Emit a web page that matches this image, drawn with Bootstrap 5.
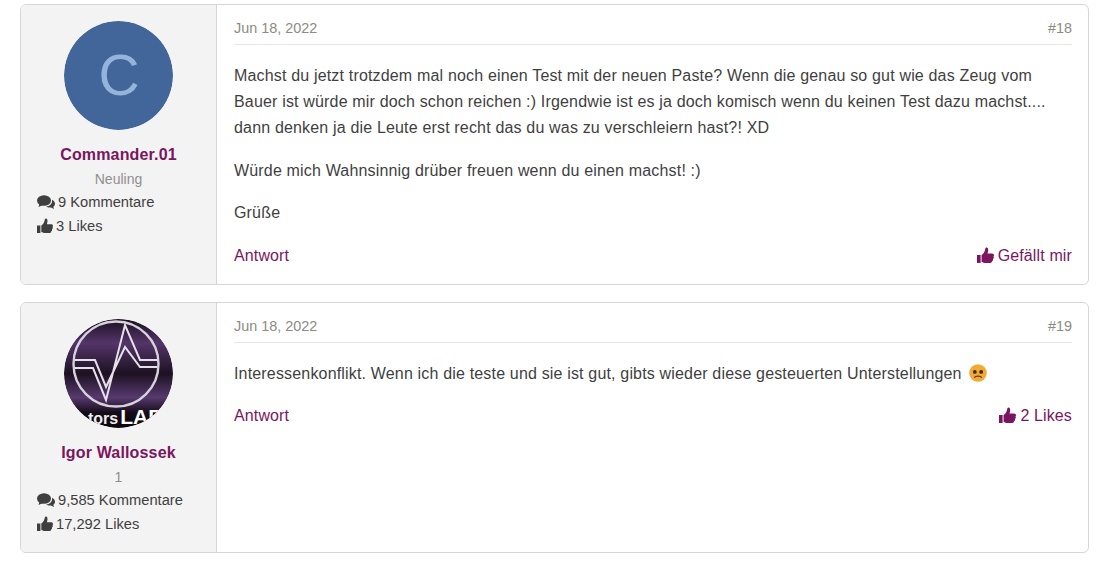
<!DOCTYPE html>
<html lang="de">
<head>
<meta charset="utf-8">
<title>Kommentare</title>
<link href="https://cdn.jsdelivr.net/npm/bootstrap@5.3.0/dist/css/bootstrap.min.css" rel="stylesheet">
<style>
body{font-family:"Liberation Sans",Arial,sans-serif;font-size:16px;color:#3f3f3f;background:#fff;}
.thread-wrap{padding:4px 12px 0 20px;}
.post-box{border:1px solid #d6d6d6;border-radius:6px;margin-bottom:17px;overflow:hidden;}
.post-box-a{height:281px;}
.post-box-b{height:251px;}
.post-side{flex:none;background:#f3f3f3;border-right:1px solid #d6d6d6;padding:16px 16px 0;box-sizing:content-box;width:163px;}
.post-avatar{width:109px;height:109px;border-radius:50%;display:block;margin:0 auto;}
.post-name{font-weight:700;color:#7b1560;text-align:center;margin-top:13px;line-height:24px;letter-spacing:.16px;}
.post-rank{font-size:14px;color:#8f8f8f;text-align:center;line-height:20px;margin-top:2px;margin-bottom:1px;}
.post-stat{font-size:14.7px;line-height:24px;color:#3f3f3f;display:flex;align-items:center;gap:3px;white-space:nowrap;}
.post-stat svg{flex:none;fill:#3f3f3f;}
.post-body{padding:11px 16px 0 17px;min-width:0;}
.post-meta{font-size:14.4px;color:#8c8c80;border-bottom:1px solid #e6e6e6;height:29px;line-height:24px;}
.post-text{line-height:26px;margin-top:18px;letter-spacing:.17px;}
.post-text p{margin:0 0 16.5px;}
.post-text.short-text p{margin-bottom:15.5px;}
.post-foot{color:#7b1560;line-height:24px;margin-top:1px;letter-spacing:.13px;}
.post-foot svg{fill:#7b1560;}
.like-link{display:flex;align-items:center;gap:4px;}
.emo{vertical-align:-3px;margin-left:3px;}
</style>
</head>
<body>
<div class="thread-wrap">

<div class="post-box post-box-a d-flex">
  <div class="post-side">
    <svg class="post-avatar" viewBox="0 0 109 109"><circle cx="54.5" cy="54.5" r="54.5" fill="#42659a"/><text x="55" y="74" font-family="Liberation Sans, sans-serif" font-size="57" fill="#94b4dc" text-anchor="middle">C</text></svg>
    <div class="post-name">Commander.01</div>
    <div class="post-rank">Neuling</div>
    <div class="post-stat"><svg width="18" height="14" viewBox="0 0 18 14"><ellipse cx="7" cy="5.500" rx="7" ry="5.300"/><path d="M2.500 8.500 1.500 12 6 10z"/><path d="M15 4.800c1.900.9 3 2.300 3 3.900 0 1.200-.7 2.300-1.700 3.100l.7 2.200-3-1.500c-1.500.3-3.700 0-4.800-1 3.500-.1 6.500-2.800 5.800-6.700z"/></svg>9 Kommentare</div>
    <div class="post-stat"><svg width="16" height="16" viewBox="0 0 16 16"><path d="M0 7.500h3.400V15H0z"/><path d="M4.300 7.500c1.800-1 3-3.200 3.400-5.500.1-1 .7-1.600 1.500-1.500 1.300.2 1.700 2 1 4.500-.1.400-.2.700-.3 1.200h4.300c1 0 1.800.7 1.800 1.600 0 .5-.2.900-.5 1.200.2.300.3.600.3 1 0 .600-.3 1.100-.8 1.400.1.200.1.400.1.600 0 .7-.4 1.200-1 1.500 0 1-.8 1.500-1.800 1.500H8.500c-1.700 0-3-.6-4.200-1z"/></svg><span>3 Likes</span></div>
  </div>
  <div class="post-body flex-grow-1 d-flex flex-column">
    <div class="post-meta d-flex justify-content-between"><span>Jun 18, 2022</span><span>#18</span></div>
    <div class="post-text">
      <p>Machst du jetzt trotzdem mal noch einen Test mit der neuen Paste? Wenn die genau so gut wie das Zeug vom Bauer ist würde mir doch schon reichen :) Irgendwie ist es ja doch komisch wenn du keinen Test dazu machst.... dann denken ja die Leute erst recht das du was zu verschleiern hast?! XD</p>
      <p>Würde mich Wahnsinnig drüber freuen wenn du einen machst! :)</p>
      <p>Grüße</p>
    </div>
    <div class="post-foot d-flex justify-content-between align-items-center">
      <span>Antwort</span>
      <span class="like-link"><svg width="17" height="17" viewBox="0 0 16 16"><path d="M0 7.500h3.400V15H0z"/><path d="M4.300 7.500c1.800-1 3-3.200 3.400-5.500.1-1 .7-1.600 1.500-1.500 1.300.2 1.700 2 1 4.500-.1.400-.2.700-.3 1.200h4.300c1 0 1.800.7 1.800 1.600 0 .5-.2.900-.5 1.200.2.300.3.600.3 1 0 .600-.3 1.100-.8 1.400.1.200.1.400.1.600 0 .7-.4 1.200-1 1.500 0 1-.8 1.500-1.800 1.500H8.500c-1.700 0-3-.6-4.200-1z"/></svg>Gefällt mir</span>
    </div>
  </div>
</div>

<div class="post-box post-box-b d-flex">
  <div class="post-side">
    <svg class="post-avatar" viewBox="0 0 109 109">
      <defs>
        <linearGradient id="lg" x1="0" y1="0" x2="0" y2="1">
          <stop offset="0" stop-color="#1a0f1e"/><stop offset=".22" stop-color="#543569"/><stop offset=".5" stop-color="#1d1122"/><stop offset=".72" stop-color="#573a6e"/><stop offset=".86" stop-color="#150c18"/><stop offset="1" stop-color="#0a060a"/>
        </linearGradient>
        <clipPath id="cp"><circle cx="54.5" cy="54.5" r="54.5"/></clipPath>
      </defs>
      <g clip-path="url(#cp)">
        <rect width="109" height="109" fill="url(#lg)"/>
        <circle cx="52" cy="45" r="42.500" fill="none" stroke="#d8d0dc" stroke-width="2.400"/>
        <path d="M11 41H31L42 68 61 28 76 48H93M11 49H29L42 81 61 6 76 41H93" fill="none" stroke="#e6e0ea" stroke-width="2" stroke-linejoin="miter"/>
        <text x="24" y="105" font-family="Liberation Sans, sans-serif" font-weight="700" font-size="16" fill="#f0eef0">tors<tspan font-size="21" dx="2" fill="#fff">LAB</tspan></text>
      </g>
    </svg>
    <div class="post-name">Igor Wallossek</div>
    <div class="post-rank">1</div>
    <div class="post-stat"><svg width="18" height="14" viewBox="0 0 18 14"><ellipse cx="7" cy="5.500" rx="7" ry="5.300"/><path d="M2.500 8.500 1.500 12 6 10z"/><path d="M15 4.800c1.900.9 3 2.300 3 3.900 0 1.200-.7 2.300-1.700 3.100l.7 2.200-3-1.500c-1.500.3-3.700 0-4.800-1 3.500-.1 6.500-2.800 5.800-6.700z"/></svg>9,585 Kommentare</div>
    <div class="post-stat"><svg width="16" height="16" viewBox="0 0 16 16"><path d="M0 7.500h3.400V15H0z"/><path d="M4.300 7.500c1.800-1 3-3.200 3.400-5.500.1-1 .7-1.600 1.500-1.500 1.300.2 1.700 2 1 4.500-.1.400-.2.700-.3 1.200h4.300c1 0 1.800.7 1.800 1.600 0 .5-.2.900-.5 1.200.2.300.3.600.3 1 0 .600-.3 1.100-.8 1.400.1.200.1.400.1.600 0 .7-.4 1.200-1 1.500 0 1-.8 1.500-1.800 1.500H8.500c-1.700 0-3-.6-4.200-1z"/></svg><span>17,292 Likes</span></div>
  </div>
  <div class="post-body flex-grow-1 d-flex flex-column">
    <div class="post-meta d-flex justify-content-between"><span>Jun 18, 2022</span><span>#19</span></div>
    <div class="post-text short-text">
      <p>Interessenkonflikt. Wenn ich die teste und sie ist gut, gibts wieder diese gesteuerten Unterstellungen <svg class="emo" width="18" height="18" viewBox="0 0 17 17"><circle cx="8.500" cy="8.500" r="8.300" fill="#f4a933"/><circle cx="5.500" cy="7.500" r="1.800" fill="#3a2c2a"/><circle cx="11.500" cy="7.500" r="1.800" fill="#3a2c2a"/><path d="M5 13c1-2 6-2 7 0" fill="none" stroke="#5a3a22" stroke-width="1.300"/></svg></p>
    </div>
    <div class="post-foot d-flex justify-content-between align-items-center">
      <span>Antwort</span>
      <span class="like-link"><svg width="17" height="17" viewBox="0 0 16 16"><path d="M0 7.500h3.400V15H0z"/><path d="M4.300 7.500c1.800-1 3-3.200 3.400-5.500.1-1 .7-1.600 1.500-1.500 1.300.2 1.700 2 1 4.500-.1.400-.2.700-.3 1.200h4.300c1 0 1.800.7 1.800 1.600 0 .5-.2.900-.5 1.200.2.300.3.600.3 1 0 .600-.3 1.100-.8 1.400.1.200.1.400.1.600 0 .7-.4 1.200-1 1.500 0 1-.8 1.500-1.800 1.500H8.500c-1.700 0-3-.6-4.200-1z"/></svg>2 Likes</span>
    </div>
  </div>
</div>

</div>
<script src="https://cdn.jsdelivr.net/npm/bootstrap@5.3.0/dist/js/bootstrap.bundle.min.js"></script>
</body>
</html>
